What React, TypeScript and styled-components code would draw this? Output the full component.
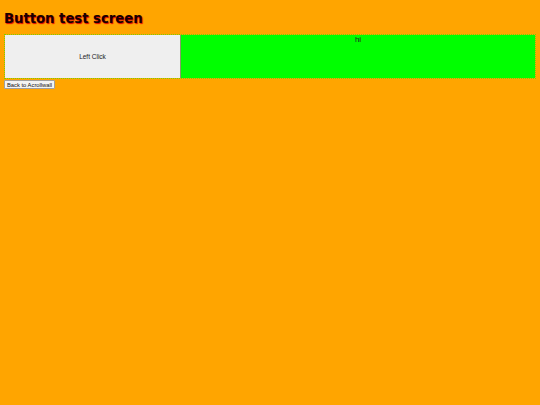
import styled, { createGlobalStyle } from 'styled-components';

const GlobalStyle = createGlobalStyle`
  html, body {
    margin: 0;
    padding: 0;
    background: #ffa500;
  }
  body {
    padding: 4px;
    font-family: "Liberation Sans", Arial, sans-serif;
  }
`;

const Title = styled.h1`
  margin: 6px 0 7px;
  font-family: "DejaVu Sans", Verdana, sans-serif;
  font-size: 13.2px;
  font-weight: 700;
  line-height: 17px;
  color: #1a0000;
  text-shadow: 1px 1px 1px #e00000;
`;

const TestArea = styled.div`
  display: flex;
  height: 43px;
  border: 1px dotted #7ccf00;
`;

const ClickButton = styled.button`
  flex: 0 0 176px;
  margin: 0;
  padding: 0;
  background: #efefef;
  border: none;
  border-right: 1px solid #8a9a6a;
  font-family: "Liberation Sans", Arial, sans-serif;
  font-size: 6.5px;
  color: #222;
`;

const Output = styled.div`
  flex: 1;
  background: #00ff00;
  text-align: center;
  font-family: "Liberation Sans", Arial, sans-serif;
  font-size: 8px;
  line-height: 10px;
  color: #222;
`;

const BackButton = styled.button`
  display: block;
  margin: 1px 0 0;
  padding: 0 2px;
  height: 9px;
  background: #f4f4f4;
  border: 1px solid #a0a0a0;
  border-radius: 1px;
  font-family: "Liberation Sans", Arial, sans-serif;
  font-size: 5.8px;
  line-height: 6px;
  color: #111;
`;

export default function App() {
  return (
    <>
      <GlobalStyle />
      <Title>Button test screen</Title>
      <TestArea>
        <ClickButton>Left Click</ClickButton>
        <Output>hi</Output>
      </TestArea>
      <BackButton>Back to Acrollwall</BackButton>
    </>
  );
}
